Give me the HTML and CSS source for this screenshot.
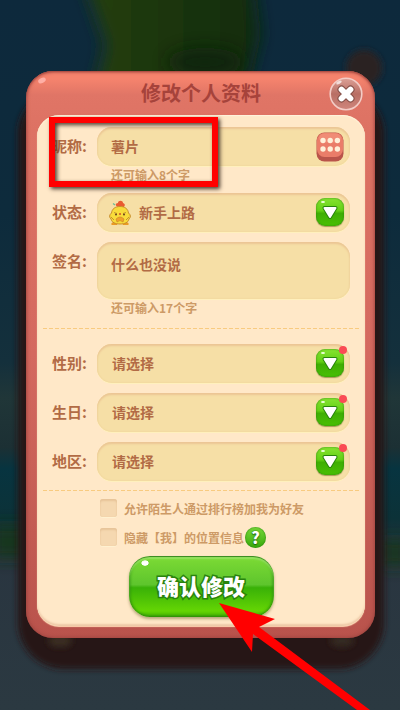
FILE: index.html
```html
<!DOCTYPE html>
<html lang="zh-CN">
<head>
<meta charset="utf-8">
<meta name="viewport" content="width=device-width, initial-scale=1">
<title>修改个人资料</title>
<link rel="stylesheet" href="styles.css">
</head>
<body>
<svg class="scene" viewBox="0 0 400 710" preserveAspectRatio="none" aria-hidden="true">
  <defs>
    <filter id="soft" x="-60%" y="-60%" width="220%" height="220%"><feGaussianBlur stdDeviation="8"/></filter>
    <filter id="softer" x="-10%" y="-10%" width="120%" height="120%"><feGaussianBlur stdDeviation="3"/></filter>
    <filter id="knob" x="-50%" y="-50%" width="200%" height="200%"><feGaussianBlur stdDeviation="3"/></filter>
    <linearGradient id="sky" x1="0" y1="0" x2="0" y2="1">
      <stop offset="0" stop-color="#0d293c"/><stop offset=".3" stop-color="#0d2b3c"/>
      <stop offset=".51" stop-color="#14303c"/><stop offset=".56" stop-color="#203638"/>
      <stop offset=".63" stop-color="#1c3034"/><stop offset=".66" stop-color="#073440"/>
      <stop offset=".73" stop-color="#0c3238"/><stop offset=".78" stop-color="#293540"/>
      <stop offset="1" stop-color="#2b3941"/>
    </linearGradient>
    <linearGradient id="tree" x1="0" y1="0" x2="1" y2="0">
      <stop offset="0" stop-color="#253f12"/><stop offset=".5" stop-color="#1b3510"/><stop offset="1" stop-color="#102b10"/>
    </linearGradient>
  </defs>
  <rect width="400" height="710" fill="url(#sky)"/>
  <path d="M82-25H252L260 35L245 90H95L106 45Z" fill="url(#tree)" filter="url(#soft)"/>
  <ellipse cx="205" cy="62" rx="38" ry="14" fill="#0b220d" filter="url(#soft)" opacity=".8"/>
  <path d="M-10 526H30V558H-10ZM380 540H410V566H380Z" fill="#16341a" filter="url(#soft)"/>
  <circle cx="364" cy="68" r="18" fill="#2c2324" filter="url(#knob)"/>
  <rect x="18" y="88" width="366" height="581" rx="46" fill="#281615" filter="url(#softer)"/>
  <ellipse cx="60" cy="641" rx="12" ry="6" fill="#3a2f23" filter="url(#knob)"/>
  <ellipse cx="342" cy="641" rx="12" ry="6" fill="#352a20" filter="url(#knob)"/>
</svg>

<main class="dialog">
  <header class="dialog-head">
    <span class="gloss" aria-hidden="true"></span>
    <h1>修改个人资料</h1>
    <button class="close" type="button" aria-label="关闭">
      <svg viewBox="0 0 34 34" aria-hidden="true">
        <defs><linearGradient id="cg" x1="0" y1="0" x2="0" y2="1"><stop offset="0" stop-color="#dca096"/><stop offset=".5" stop-color="#b86e64"/><stop offset="1" stop-color="#d0877d"/></linearGradient></defs>
        <circle cx="17" cy="17" r="15.8" fill="url(#cg)" stroke="#f3ccc6" stroke-width="1.6"/>
        <ellipse cx="10" cy="5.5" rx="3" ry="1.4" fill="#fff" opacity=".7" transform="rotate(-28 10 5.5)"/>
        <path d="M12.5 12.5L21.5 21.5M21.5 12.5L12.5 21.5" stroke="#875149" stroke-width="8" stroke-linecap="round"/>
        <path d="M12.5 12.5L21.5 21.5M21.5 12.5L12.5 21.5" stroke="#fff" stroke-width="5.8" stroke-linecap="round"/>
      </svg>
    </button>
  </header>

  <form class="panel">
    <div class="row">
      <label for="nick">昵称:</label>
      <div class="field">
        <input id="nick" type="text" value="薯片">
        <button class="dice" type="button" aria-label="随机昵称">
          <svg viewBox="0 0 28 30" aria-hidden="true">
            <rect x=".5" y=".5" width="27" height="29" rx="8" fill="#b9544a"/>
            <rect x="1" y="1" width="26" height="24" rx="7.5" fill="#ea7d69"/>
            <rect x="3" y="1.5" width="22" height="9" rx="5" fill="#f08c76"/>
            <g fill="#fff0d9"><circle cx="7" cy="8.500" r="2.700"/><circle cx="14.200" cy="8.500" r="2.700"/><circle cx="21.400" cy="8.500" r="2.700"/><circle cx="7" cy="17" r="2.700"/><circle cx="14.200" cy="17" r="2.700"/><circle cx="21.400" cy="17" r="2.700"/></g>
          </svg>
        </button>
      </div>
    </div>
    <p class="hint">还可输入8个字</p>

    <div class="row">
      <label for="status">状态:</label>
      <div class="field">
        <svg class="chick" viewBox="0 0 24 26" aria-hidden="true">
          <path d="M10 7C7 6 7 3 10 3C10 0 15 0 15 3C18 4 17 7 14 8Z" fill="#e95a30"/>
          <path d="M5 3.500L7 5" stroke="#6bbd9a" stroke-width="1.300"/>
          <path d="M5 22Q2 24 4 25H9L10 22ZM14 22L15 25H20Q22 24 19 22Z" fill="#ea9a26"/>
          <path d="M12 6.500C17 6.500 20 9 20.500 13Q24 16 21 19C20 22.500 17 24 12 24S4 22.500 3 19Q0 16 3.500 13C4 9 7 6.500 12 6.500Z" fill="#f8db3b" stroke="#c98f2c"/>
          <path d="M6 12.500L9 13.500M18 12.500L15 13.500M3 17L6 20M21 17L18 20" stroke="#b5802f" stroke-width=".8" fill="none"/>
          <circle cx="8" cy="14.500" r="1" fill="#65431d"/><circle cx="16" cy="14.500" r="1" fill="#65431d"/>
          <path d="M8 19Q12 15 16 19L15 22Q12 19 9 22Z" fill="#f0a12b" stroke="#c98228" stroke-width=".6"/>
          <circle cx="12" cy="14" r="1" fill="#d64f2c"/>
        </svg>
        <select id="status"><option>新手上路</option></select>
        <span class="arrow" aria-hidden="true"><svg viewBox="0 0 28 28"><path d="M8.500 10H19.500L14 19Z" fill="#fff" stroke="#27840b" stroke-width="4" stroke-linejoin="round"/><path d="M8.500 10H19.500L14 19Z" fill="#fff" stroke="#fff" stroke-width="2" stroke-linejoin="round"/></svg></span>
      </div>
    </div>
    <div class="row tall">
      <label for="sign">签名:</label>
      <div class="field"><textarea id="sign">什么也没说</textarea></div>
    </div>
    <p class="hint">还可输入17个字</p>

    <hr class="first-rule">

    <div class="row">
      <label for="gender">性别:</label>
      <div class="field">
        <select id="gender"><option>请选择</option></select>
        <span class="arrow dot" aria-hidden="true"><svg viewBox="0 0 28 28"><path d="M8.500 10H19.500L14 19Z" fill="#fff" stroke="#27840b" stroke-width="4" stroke-linejoin="round"/><path d="M8.500 10H19.500L14 19Z" fill="#fff" stroke="#fff" stroke-width="2" stroke-linejoin="round"/></svg></span>
      </div>
    </div>
    <div class="row">
      <label for="birth">生日:</label>
      <div class="field">
        <select id="birth"><option>请选择</option></select>
        <span class="arrow dot" aria-hidden="true"><svg viewBox="0 0 28 28"><path d="M8.500 10H19.500L14 19Z" fill="#fff" stroke="#27840b" stroke-width="4" stroke-linejoin="round"/><path d="M8.500 10H19.500L14 19Z" fill="#fff" stroke="#fff" stroke-width="2" stroke-linejoin="round"/></svg></span>
      </div>
    </div>
    <div class="row">
      <label for="area">地区:</label>
      <div class="field">
        <select id="area"><option>请选择</option></select>
        <span class="arrow dot" aria-hidden="true"><svg viewBox="0 0 28 28"><path d="M8.500 10H19.500L14 19Z" fill="#fff" stroke="#27840b" stroke-width="4" stroke-linejoin="round"/><path d="M8.500 10H19.500L14 19Z" fill="#fff" stroke="#fff" stroke-width="2" stroke-linejoin="round"/></svg></span>
      </div>
    </div>

    <hr>

    <div class="checks">
      <div class="check"><input id="allow" type="checkbox"><label for="allow">允许陌生人通过排行榜加我为好友</label></div>
      <div class="check"><input id="hide" type="checkbox"><label for="hide">隐藏【我】的位置信息</label><button class="help" type="button" aria-label="帮助">?</button></div>
    </div>

    <button class="submit" type="submit">确认修改</button>
  </form>
</main>

<div class="marker" aria-hidden="true"></div>
<svg class="pointer" viewBox="0 0 151 107" aria-hidden="true"><path d="M0 0L56 16L40 24L151 107H138L34 31L33 49Z" fill="#f00"/></svg>
</body>
</html>
```
FILE: styles.css
```css
* { box-sizing: border-box; }

body {
  position: relative;
  min-height: 100vh;
  margin: 0;
  padding: 71px 25px 72px 26px;
  overflow-x: hidden;
  background: #0d293c;
  color: #b26b45;
  font-family: "Noto Sans CJK SC", sans-serif;
  font-weight: 700;
}

button, input, select, textarea {
  margin: 0;
  padding: 0;
  border: 0;
  background: none;
  color: inherit;
  font: inherit;
  appearance: none;
  outline: none;
}

svg { display: block; }

.scene {
  position: absolute;
  inset: 0;
  width: 100%;
  height: 100%;
}

.dialog {
  position: relative;
  padding: 0 10px 12px 11px;
  border-radius: 27px;
  background: linear-gradient(#f5836d 0, #f5836d 8px, #e07566 24px, #dd7263 60px, #d4695f 50%, #b9534c 100%);
  box-shadow: inset 0 1px 2px #a84940, inset 0 0 4px #94423d;
}

.dialog-head {
  position: relative;
  display: flex;
  align-items: center;
  justify-content: center;
  height: 44px;
}

.gloss {
  position: absolute;
  top: 7px;
  left: 1px;
  width: 8px;
  height: 5px;
  border-radius: 50%;
  background: #ffafa5;
  transform: rotate(-25deg);
}

h1 {
  margin: 0;
  color: #a6433b;
  font-size: 20px;
  line-height: 44px;
}

.close {
  position: absolute;
  top: 6px;
  right: 2px;
  width: 34px;
  height: 34px;
}

.panel {
  padding: 12px 15px 9px;
  border-radius: 22px;
  background: #ffe8c8;
  box-shadow: 0 1px 1px #ffd5b2, inset 0 1px 1px #fff4dc, inset 0 -2px 2px #eec9a7;
}

.row {
  display: grid;
  grid-template-columns: 45px minmax(0, 1fr);
  margin-bottom: 10px;
  font-size: 15px;
}

.row > label {
  line-height: 38px;
  white-space: nowrap;
}

.field {
  position: relative;
  display: flex;
  align-items: center;
  height: 39px;
  padding: 0 6px 0 14px;
  border-radius: 15px;
  background: #f6dfa6;
  box-shadow: inset 0 2px 2px #ebc695, inset 0 0 2px #ecd095, 0 1px 0 #fff0bd;
  font-size: 14px;
}

.tall .field { height: 57px; }

.field input,
.field select,
.field textarea {
  flex: 1;
  width: 100%;
  min-width: 0;
  height: 100%;
  padding-bottom: 2px;
}

.field select { padding-left: 1px; }

.field textarea {
  padding-top: 12px;
  line-height: 21px;
  resize: none;
  overflow: hidden;
}

.chick {
  flex: none;
  width: 24px;
  height: 26px;
  margin: 0 6px 0 -3px;
}

.dice {
  flex: none;
  width: 28px;
  height: 30px;
}

.arrow {
  position: absolute;
  top: 5px;
  right: 6px;
  width: 28px;
  height: 28px;
  border-radius: 9px;
  background: linear-gradient(#86e431, #63cf15 45%, #3fae03 55%, #48c004);
  box-shadow: inset 0 0 2px #287d12, 0 1px 1px #a69a58;
  pointer-events: none;
}

.arrow::before {
  content: "";
  position: absolute;
  top: 3px;
  left: 5px;
  width: 4px;
  height: 2px;
  border-radius: 50%;
  background: #edffd9;
}

.dot::after {
  content: "";
  position: absolute;
  top: -3px;
  right: -3px;
  width: 8px;
  height: 8px;
  border-radius: 50%;
  background: #fa4b55;
}

.hint {
  margin: -10px 0 9px 59px;
  color: #cd9a66;
  font-size: 12px;
  line-height: 18px;
}

hr {
  height: 1px;
  margin: -1px -9px 8px;
  border: 0;
  background: repeating-linear-gradient(90deg, #f8cb80 0, #f8cb80 4px, transparent 4px, transparent 6px);
}

.first-rule { margin: 11px -9px 15px; }

.checks {
  display: grid;
  gap: 11px;
  margin: 0 0 10px 48px;
  color: #cd9a66;
  font-size: 12px;
}

.check {
  display: flex;
  align-items: center;
  height: 18px;
  white-space: nowrap;
}

.check input {
  width: 17px;
  height: 18px;
  margin-right: 7px;
  border-radius: 3px;
  background: #f5d8b0;
  box-shadow: inset 0 2px 2px #e7c499, inset 0 0 1px #e5c096, 0 1px 0 #fff1d0;
}

.check input:checked { background: #6bcb22; }

.help {
  width: 21px;
  height: 21px;
  margin-left: 1px;
  border-radius: 50%;
  background: linear-gradient(#79d93a, #38a90a);
  box-shadow: inset 0 0 2px #217c0d;
  color: #fff;
  font-size: 16px;
  font-weight: 900;
  line-height: 20px;
  text-shadow: 0 0 2px #1c680b, 0 1px 1px #1c680b;
}

.submit {
  display: block;
  width: 145px;
  height: 61px;
  margin: 0 auto;
  padding-bottom: 2px;
  border-radius: 21px;
  background:
    radial-gradient(ellipse 4px 3px at 16px 7px, #fff 80%, transparent),
    linear-gradient(#7ddb35 0, #5ec52d 47%, #39b107 52%, #64d504 90%, #46b404);
  box-shadow: inset 0 1px 1px #34841c, inset 0 3px 2px #9ce866, inset 0 0 3px 1px #24830c, 0 2px 3px #b7a679;
  color: #fff;
  font-size: 22px;
  font-weight: 900;
  line-height: 57px;
  -webkit-text-stroke: 3px #29830e;
  paint-order: stroke fill;
}

.marker {
  position: absolute;
  top: 117px;
  left: 49px;
  width: 169px;
  height: 70px;
  border: 6px solid #f00;
  box-shadow: 2px 2px 4px #4b3b30, inset 2px 2px 4px #4b3b30;
  pointer-events: none;
}

.pointer {
  position: absolute;
  top: 603px;
  left: 219px;
  width: 151px;
  height: 107px;
  pointer-events: none;
}
```
